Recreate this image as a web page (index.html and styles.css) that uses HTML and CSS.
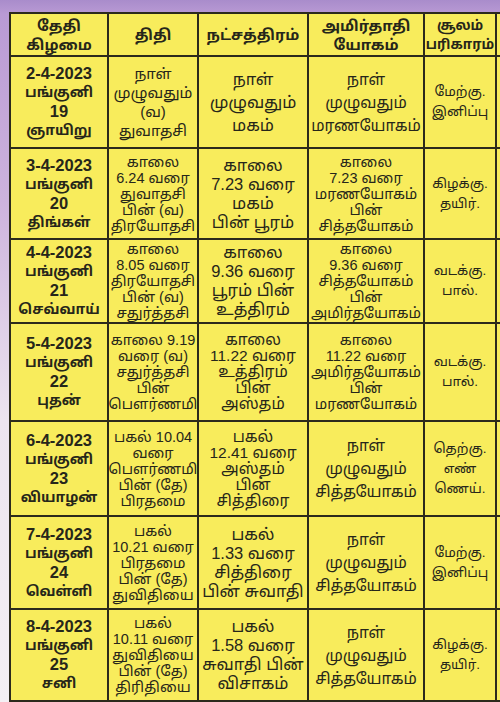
FILE: index.html
```html
<!DOCTYPE html>
<html lang="ta">
<head>
<meta charset="utf-8">
<title>பஞ்சாங்கம்</title>
<link rel="stylesheet" href="styles.css">
</head>
<body>
<div class="page">
  <div class="table">
    <div class="cell head">தேதி<br>கிழமை</div>
    <div class="cell head">திதி</div>
    <div class="cell head">நட்சத்திரம்</div>
    <div class="cell head">அமிர்தாதி<br>யோகம்</div>
    <div class="cell head narrow">சூலம்<br>பரிகாரம்</div>
    <div class="cell head"></div>

    <div class="cell date"><b>2-4-2023</b>பங்குனி<br><b>19</b>ஞாயிறு</div>
    <div class="cell tithi four">நாள்<br>முழுவதும்<br>(வ)<br>துவாதசி</div>
    <div class="cell star three">நாள்<br>முழுவதும்<br>மகம்</div>
    <div class="cell yoga three">நாள்<br>முழுவதும்<br>மரணயோகம்</div>
    <div class="cell small">மேற்கு.<br>இனிப்பு</div>
    <div class="cell"></div>

    <div class="cell date"><b>3-4-2023</b>பங்குனி<br><b>20</b>திங்கள்</div>
    <div class="cell tithi five">காலை<br>6.24 வரை<br>துவாதசி<br>பின் (வ)<br>திரயோதசி</div>
    <div class="cell star four">காலை<br>7.23 வரை<br>மகம்<br>பின் பூரம்</div>
    <div class="cell yoga five">காலை<br>7.23 வரை<br>மரணயோகம்<br>பின்<br>சித்தயோகம்</div>
    <div class="cell small">கிழக்கு.<br>தயிர்.</div>
    <div class="cell"></div>

    <div class="cell date"><b>4-4-2023</b>பங்குனி<br><b>21</b>செவ்வாய்</div>
    <div class="cell tithi five">காலை<br>8.05 வரை<br>திரயோதசி<br>பின் (வ)<br>சதுர்த்தசி</div>
    <div class="cell star four">காலை<br>9.36 வரை<br>பூரம் பின்<br>உத்திரம்</div>
    <div class="cell yoga five">காலை<br>9.36 வரை<br>சித்தயோகம்<br>பின்<br>அமிர்தயோகம்</div>
    <div class="cell small">வடக்கு.<br>பால்.</div>
    <div class="cell"></div>

    <div class="cell date"><b>5-4-2023</b>பங்குனி<br><b>22</b>புதன்</div>
    <div class="cell tithi five">காலை 9.19<br>வரை (வ)<br>சதுர்த்தசி<br>பின்<br>பௌர்ணமி</div>
    <div class="cell star five">காலை<br>11.22 வரை<br>உத்திரம்<br>பின்<br>அஸ்தம்</div>
    <div class="cell yoga five">காலை<br>11.22 வரை<br>அமிர்தயோகம்<br>பின்<br>மரணயோகம்</div>
    <div class="cell small">வடக்கு.<br>பால்.</div>
    <div class="cell"></div>

    <div class="cell date"><b>6-4-2023</b>பங்குனி<br><b>23</b>வியாழன்</div>
    <div class="cell tithi five">பகல் 10.04<br>வரை<br>பௌர்ணமி<br>பின் (தே)<br>பிரதமை</div>
    <div class="cell star five">பகல்<br>12.41 வரை<br>அஸ்தம்<br>பின்<br>சித்திரை</div>
    <div class="cell yoga three">நாள்<br>முழுவதும்<br>சித்தயோகம்</div>
    <div class="cell small">தெற்கு.<br>எண்<br>ணெய்.</div>
    <div class="cell"></div>

    <div class="cell date"><b>7-4-2023</b>பங்குனி<br><b>24</b>வெள்ளி</div>
    <div class="cell tithi five">பகல்<br>10.21 வரை<br>பிரதமை<br>பின் (தே)<br>துவிதியை</div>
    <div class="cell star four">பகல்<br>1.33 வரை<br>சித்திரை<br>பின் சுவாதி</div>
    <div class="cell yoga three">நாள்<br>முழுவதும்<br>சித்தயோகம்</div>
    <div class="cell small">மேற்கு.<br>இனிப்பு</div>
    <div class="cell"></div>

    <div class="cell date"><b>8-4-2023</b>பங்குனி<br><b>25</b>சனி</div>
    <div class="cell tithi five">பகல்<br>10.11 வரை<br>துவிதியை<br>பின் (தே)<br>திரிதியை</div>
    <div class="cell star four">பகல்<br>1.58 வரை<br>சுவாதி பின்<br>விசாகம்</div>
    <div class="cell yoga three">நாள்<br>முழுவதும்<br>சித்தயோகம்</div>
    <div class="cell small">கிழக்கு.<br>தயிர்.</div>
    <div class="cell"></div>
  </div>
</div>
</body>
</html>
```
FILE: styles.css
```css
html, body {
  margin: 0;
  padding: 0;
  width: 500px;
  height: 702px;
  overflow: hidden;
}
body {
  background: linear-gradient(180deg, #a98ccb 0px, #b99ad4 14px, #cdb3dd 200px, #ece4ef 420px, #f4f0f4 702px);
  font-family: "Liberation Sans", "Noto Sans Tamil", "Lohit Tamil", "FreeSans", "Noto Sans", sans-serif;
  color: #26261a;
}
.page {
  padding: 12px 0 0 9px;
}
.table {
  display: grid;
  grid-template-columns: 96px 88px 108px 114px 70px 3px;
  grid-template-rows: 41px 90px 89px 82px 96px 93px 91px 90px;
  gap: 2px;
  padding: 2px 0 2px 2px;
  background: #2c2a1c;
  width: max-content;
}
.cell {
  background: #f8ec5c;
  display: flex;
  align-items: center;
  justify-content: center;
  flex-direction: column;
  text-align: center;
  font-size: 16px;
  line-height: 20px;
  white-space: nowrap;
  overflow: hidden;
}
.head {
  font-size: 15px;
  font-weight: bold;
  line-height: 19px;
}
.head.narrow {
  font-size: 13.5px;
}
.date {
  font-size: 14px;
  font-weight: bold;
  line-height: 19px;
}
.date b {
  display: block;
  font-size: 16.5px;
  line-height: 19px;
}
.three {
  line-height: 23px;
}
.four {
  line-height: 19px;
}
.five {
  line-height: 16px;
}
.tithi {
  font-size: 15px;
}
.tithi.five {
  font-size: 14.5px;
}
.star {
  font-size: 16.5px;
}
.star.five {
  font-size: 15.5px;
}
.yoga {
  font-size: 15.5px;
}
.yoga.five {
  font-size: 14.5px;
}
.small {
  font-size: 13.5px;
  line-height: 20px;
}
```
